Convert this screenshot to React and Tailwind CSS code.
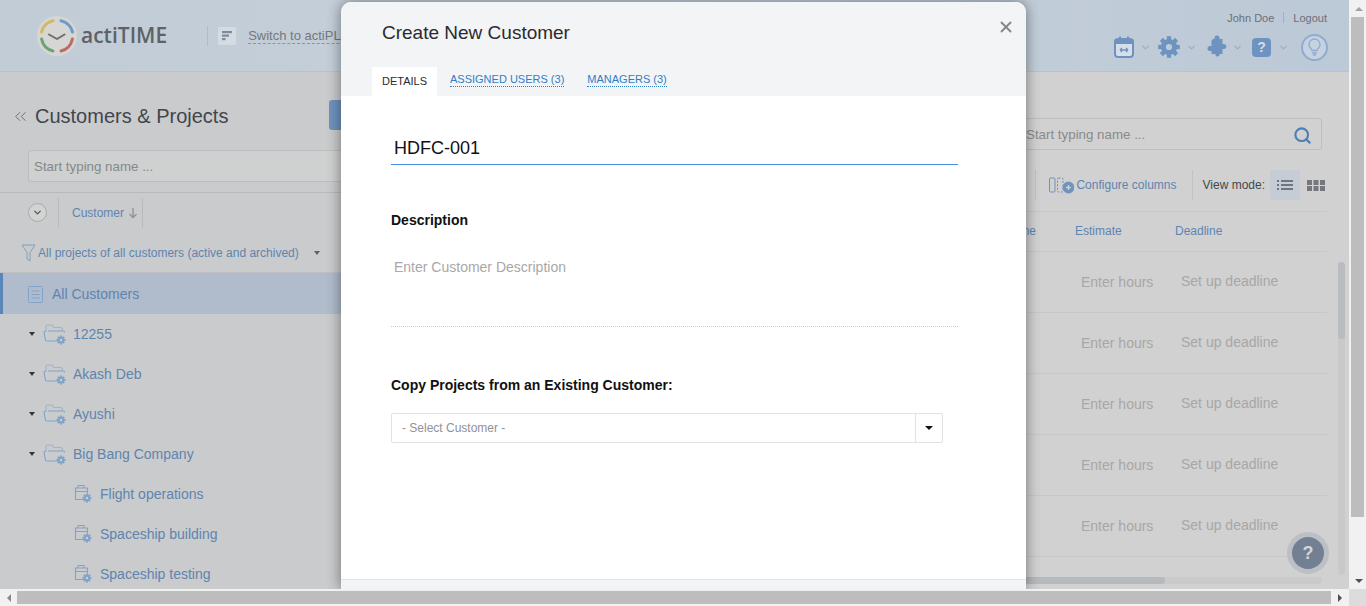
import { ChevronDown, ChevronsLeft, Search, X } from 'lucide-react';

const font = { sans: 'font-["Liberation_Sans",Arial,sans-serif]' };

const customers = [
  { name: '12255', arrow: true },
  { name: 'Akash Deb', arrow: true },
  { name: 'Ayushi', arrow: true },
  { name: 'Big Bang Company', arrow: true },
  { name: 'Flight operations' },
  { name: 'Spaceship building' },
  { name: 'Spaceship testing' },
];

function Gear({ cx, cy, r = 4, color = '#82a3c9' }) {
  const teeth = [0, 45, 90, 135, 180, 225, 270, 315];
  return (
    <g>
      {teeth.map((a) => (
        <rect key={a} x={cx - r * 0.24} y={cy - r * 1.2} width={r * 0.48} height={r * 0.6} fill={color} transform={`rotate(${a} ${cx} ${cy})`} />
      ))}
      <circle cx={cx} cy={cy} r={r * 0.62} fill="none" stroke={color} strokeWidth={r * 0.55} />
    </g>
  );
}

function FolderIcon() {
  return (
    <svg width="24" height="22" viewBox="0 0 24 22" fill="none" className="shrink-0">
      <path d="M3 9V3.500C3 2.700 3.600 2 4.500 2H9l2 2.500h7c.8 0 1.300.6 1.300 1.300V8" stroke="#9db5d2" strokeWidth="1.100" />
      <path d="M5 8h15.500c.8 0 1.200.6 1 1.300M1 10c0-1 .7-2 2-2M1 10l1.500 7c.1.600.6 1 1.200 1H14" stroke="#82a3c9" strokeWidth="1.100" />
      <Gear cx={18} cy={17} r={3.800} />
    </svg>
  );
}

function ProjectIcon() {
  return (
    <svg width="18" height="20" viewBox="0 0 18 20" fill="none" className="shrink-0">
      <path d="M9.500 15.500H1.500V4h12v5M4 4V1.500h6V4M1.500 7.500h12" stroke="#82a3c9" strokeWidth="1.100" />
      <Gear cx={13} cy={14} r={3.800} />
    </svg>
  );
}

function Logo() {
  return (
    <svg width="42" height="42" viewBox="0 0 42 42" fill="none">
      <circle cx="21" cy="21" r="20" fill="#d6d6d4" />
      <g strokeWidth="3" strokeLinecap="round">
        <path d="M5.500 17A15.500 15.500 0 0 1 17 5.800" stroke="#d0b964" />
        <path d="M25 5.800A15.500 15.500 0 0 1 36.500 17" stroke="#6f99c6" />
        <path d="M36.400 24A15.500 15.500 0 0 1 25 36" stroke="#bb6b66" />
        <path d="M17 36A15.500 15.500 0 0 1 5.600 24" stroke="#6ea274" />
      </g>
      <path d="M13 19.500l8 4.500 7.500-4.500" stroke="#6d6d6d" strokeWidth="2" strokeLinecap="round" strokeLinejoin="round" />
    </svg>
  );
}

function HeaderIcons() {
  const blue = '#6e93c0';
  const Chev = () => <ChevronDown size={11} strokeWidth={3} color="#a6adb6" />;
  return (
    <div className="flex items-center">
      <svg width="22" height="24" viewBox="0 0 22 24" fill="none">
        <rect x="2" y="4" width="18" height="18" rx="3" fill="#d5dee9" stroke={blue} strokeWidth="2" />
        <path d="M2 9V6.500C2 5 3 4 4.500 4h13C19 4 20 5 20 6.500V9z" fill={blue} />
        <rect x="6" y="1.500" width="2" height="4" fill={blue} />
        <rect x="14" y="1.500" width="2" height="4" fill={blue} />
        <path d="M7 15h8M7 15l2-2M7 15l2 2M15 15l-2-2M15 15l-2 2" stroke={blue} strokeWidth="1.300" />
      </svg>
      <span className="mr-[7.500px] ml-[4.500px]"><Chev /></span>
      <svg width="22" height="22" viewBox="0 0 22 22"><Gear cx={11} cy={11} r={9} color={blue} /></svg>
      <span className="mr-[9px] ml-[5.500px]"><Chev /></span>
      <svg width="22" height="24" viewBox="1.500 0 22 24" fill={blue}>
        <path d="M9 4h1V3a2.500 2.500 0 0 1 5 0v1h3v5h1.500a2.500 2.500 0 0 1 0 5H18v5h-3v1.500a2.500 2.500 0 0 1-4 0V19H7v-3H5.500a2.500 2.500 0 0 1 0-5H7V6c0-1 1-2 2-2z" />
      </svg>
      <span className="mr-[9.500px] ml-[4px]"><Chev /></span>
      <div className={`flex h-[19px] w-[19px] items-center justify-center rounded-[4px] bg-[#6e93c0] text-[14px] font-bold text-[#d5dee9] ${font.sans}`}>?</div>
      <span className="mr-[12.500px] ml-[6.500px]"><Chev /></span>
      <div className="flex h-[27px] w-[27px] items-center justify-center rounded-full border-2 border-[#8dacd0] bg-[#c6d2df]">
        <svg width="15" height="18" viewBox="0 0 15 18" fill="none" stroke="#8dacd0" strokeWidth="1.300">
          <path d="M5 12.500C4.500 10.500 2 9.500 2 6.500a5.500 5.500 0 0 1 11 0c0 3-2.500 4-3 6z" />
          <path d="M5 15h5M6 17h3" />
        </svg>
      </div>
    </div>
  );
}

function Sidebar() {
  return (
    <div className="flex w-[341px] shrink-0 flex-col bg-[#cacbcc]">
      <div className="flex h-[78px] shrink-0 items-center pt-[10px] pl-[11px]">
        <ChevronsLeft size={19} strokeWidth={1} color="#50555b" />
        <h1 className="ml-[5px] text-[20px] whitespace-nowrap text-[#40464d]">Customers &amp; Projects</h1>
        <div className="-mt-[2px] ml-auto h-[30px] w-[12px] rounded-l-[3px] bg-[#6f93bd]" />
      </div>
      <div className="ml-[28px] flex h-[32px] shrink-0 items-center rounded-l-[3px] border border-r-0 border-[#bcbdbe] bg-[#cfd0d0] pt-[2px] pl-[5px] text-[13.330px] text-[#85888b]">
        Start typing name ...
      </div>
      <div className="mt-[10px] flex h-[42px] shrink-0 items-center border-t border-[#b9babb] pb-[2px] pl-[28px]">
        <div className="flex h-[19px] w-[19px] items-center justify-center rounded-full border border-[#a9abad] bg-[#d2d3d3]">
          <ChevronDown size={11} strokeWidth={3} color="#54585c" />
        </div>
        <div className="ml-[11px] h-[30px] w-px bg-[#b9babb]" />
        <span className="ml-[13px] text-[12px] text-[#5f84b0]">Customer</span>
        <svg width="10" height="12" viewBox="0 0 10 12" fill="none" stroke="#8e9296" strokeWidth="1.300" className="ml-[4px]"><path d="M5 1v9M1.500 7L5 10.500 8.500 7" /></svg>
        <div className="ml-[4px] h-[30px] w-px bg-[#b9babb]" />
      </div>
      <div className="flex h-[39px] shrink-0 items-center border-b border-[#bfc0c1] pl-[21px]">
        <svg width="15" height="18" viewBox="0 0 15 18" fill="none" stroke="#7f9ec3" strokeWidth="1"><path d="M1 1h13L9 8.500V17l-3-2V8.500z" /></svg>
        <span className="ml-[2px] text-[12px] text-[#5f84b0]">All projects of all customers (active and archived)</span>
        <div className="ml-[15px] h-0 w-0 border-x-[3.500px] border-t-[4px] border-x-transparent border-t-[#5c6166]" />
      </div>
      <div className="flex h-[41px] shrink-0 items-center border-l-[3px] border-[#5b87b8] bg-[#b0bccb] pt-[2px] pl-[25px]">
        <svg width="15" height="17" viewBox="0 0 15 17" fill="none" stroke="#82a3c9" strokeWidth="1"><rect x="0.500" y="0.500" width="14" height="16" rx="1" /><path d="M3.500 5h8M3.500 8.500h8M3.500 12h8" /></svg>
        <span className="ml-[9px] text-[14px] text-[#5f84b0]">All Customers</span>
      </div>
      {customers.map((c) => (
        <div key={c.name} className={`flex h-[40px] shrink-0 items-center ${c.arrow ? 'pl-[28px]' : 'pl-[74px]'}`}>
          {c.arrow && <div className="mr-[8px] ml-px h-0 w-0 border-x-[3.500px] border-t-[4px] border-x-transparent border-t-[#33363a]" />}
          {c.arrow ? <FolderIcon /> : <ProjectIcon />}
          <span className={`${c.arrow ? 'ml-[6px]' : 'ml-[8px]'} text-[14px] whitespace-nowrap text-[#5f84b0]`}>{c.name}</span>
        </div>
      ))}
    </div>
  );
}

function TasksPanel() {
  return (
    <div className="relative flex flex-1 flex-col items-end overflow-hidden bg-[#d1d1d1]">
      <div className="mt-[46px] mr-[27px] flex h-[32px] w-[400px] items-center justify-between rounded-r-[3px] border border-[#bebebe] pt-[2px] pr-[9px] pl-[103px] text-[13.330px] text-[#8a8a8a]">
        Start typing name ...
        <Search size={19} strokeWidth={2.700} color="#4f80b4" />
      </div>
      <div className="mt-[20px] mr-[24px] flex h-[30px] items-center">
        <div className="h-[30px] w-px bg-[#c2c2c2]" />
        <svg width="25" height="18" viewBox="0 0 25 18" fill="none" stroke="#6f93bd" strokeWidth="1" className="ml-[13px]">
          <rect x="0.500" y="2" width="5.500" height="14" rx="1" />
          <rect x="8.500" y="2" width="5.500" height="14" rx="1" strokeDasharray="2 1.500" />
          <circle cx="19.500" cy="11.500" r="5.500" fill="#6f93bd" />
          <path d="M17 11.500h5M19.500 9v5" stroke="#d1d1d1" strokeWidth="1.300" />
        </svg>
        <span className="ml-[2px] text-[12px] whitespace-nowrap text-[#5f84b0]">Configure columns</span>
        <div className="ml-[15px] h-[30px] w-px bg-[#c2c2c2]" />
        <span className="ml-[10px] text-[12px] whitespace-nowrap text-[#44484d]">View mode:</span>
        <div className="ml-[5px] flex h-[30px] w-[30px] items-center justify-center bg-[#c5ccd6]">
          <svg width="16" height="10" viewBox="0 0 16 10" fill="#6f7680"><rect x="0" y="0" width="2" height="2" /><rect x="4" y="0" width="12" height="2" /><rect x="0" y="4" width="2" height="2" /><rect x="4" y="4" width="12" height="2" /><rect x="0" y="8" width="2" height="2" /><rect x="4" y="8" width="12" height="2" /></svg>
        </div>
        <svg width="18" height="11" viewBox="0 0 18 11" fill="#74787d" className="ml-[7px]"><rect x="0" y="0" width="5" height="5" /><rect x="6.500" y="0" width="5" height="5" /><rect x="13" y="0" width="5" height="5" /><rect x="0" y="6" width="5" height="5" /><rect x="6.500" y="6" width="5" height="5" /><rect x="13" y="6" width="5" height="5" /></svg>
      </div>
      <div className="mt-[11px] mr-[22px] w-[400px]">
        <div className="grid h-[41px] grid-cols-[148px_100px_1fr] items-center border-y border-[#c8c8c8] pb-[2px] text-[12px] text-[#5f84b0]">
          <span className="pr-[39px] text-right whitespace-nowrap">Time Zone</span>
          <span>Estimate</span>
          <span>Deadline</span>
        </div>
        {[0, 1, 2, 3, 4].map((i) => (
          <div key={i} className="grid h-[61px] grid-cols-[154px_100px_1fr] items-center border-b border-[#c8c8c8] text-[14px] text-[#a7a7a7]">
            <span />
            <span className="mt-px whitespace-nowrap">Enter hours</span>
            <span className="-mt-px whitespace-nowrap">Set up deadline</span>
          </div>
        ))}
      </div>
      {/* inner scrollbars */}
      <div className="absolute top-[190px] right-[4px] h-[313px] w-[7px] rounded-full bg-[#c9c9c9]">
        <div className="h-[77px] rounded-full bg-[#b8bcc0]" />
      </div>
      <div className="absolute right-[27px] bottom-[5px] h-[7px] w-[300px] rounded-full bg-[#c9cacb]">
        <div className="h-[7px] w-[143px] rounded-full bg-[#b6babd]" />
      </div>
      <div className="absolute right-[20px] bottom-[15px] flex h-[42px] w-[42px] items-center justify-center rounded-full border-[5px] border-[#bcc0c6] bg-[#737f93] text-[18px] font-bold text-[#d2d5da]">?</div>
    </div>
  );
}

function CustomerModal() {
  return (
    <div className="absolute top-[2px] left-[341px] flex h-[587px] w-[685px] flex-col overflow-hidden rounded-t-[10px] bg-white shadow-[0_0_14px_rgba(0,0,0,0.45)]">
      <div className="relative h-[94px] shrink-0 bg-[#f3f4f6] pl-[31px]">
        <h2 className="pt-[19px] pl-[10px] text-[19px] leading-[24px] text-[#2b2b2b]">Create New Customer</h2>
        <X size={18} strokeWidth={2.500} color="#85888c" className="absolute top-[16px] right-[11px]" />
        <div className="mt-[22px] flex h-[29px] text-[11px]">
          <div className="flex w-[65px] items-center justify-center bg-white text-[#2b2b2b]">DETAILS</div>
          <span className="mt-[6px] ml-[13px] h-[14px] border-b border-dotted border-[#2f7ec7] leading-[13px] text-[#2f7ec7]">ASSIGNED USERS (3)</span>
          <span className="mt-[6px] ml-[23px] h-[14px] border-b border-dotted border-[#2f7ec7] leading-[13px] text-[#2f7ec7]">MANAGERS (3)</span>
        </div>
      </div>
      <div className="flex-1 pl-[50px]">
        <div className="mt-[40px] h-[29px] w-[567px] border-b border-[#4a90e2] pl-[3px] text-[18px] leading-[24px] text-[#111]">HDFC-001</div>
        <div className="mt-[46px] text-[14px] leading-[18px] font-bold text-[#111]">Description</div>
        <div className="mt-[29px] h-[69px] w-[567px] border-b border-dotted border-[#c9c9c9] pl-[3px] text-[14px] leading-[18px] text-[#a8a8a8]">Enter Customer Description</div>
        <div className="mt-[49px] text-[14px] leading-[18px] font-bold text-[#111]">Copy Projects from an Existing Customer:</div>
        <div className="mt-[19px] flex h-[30px] w-[552px] items-center rounded-[2px] border border-[#e2e2e2] text-[12px] text-[#8f9297]">
          <span className="flex-1 pl-[10px]">- Select Customer -</span>
          <div className="flex h-full w-[27px] items-center justify-center border-l border-[#e2e2e2]">
            <div className="h-0 w-0 border-x-[4px] border-t-[4px] border-x-transparent border-t-[#111]" />
          </div>
        </div>
      </div>
      <div className="h-[10px] shrink-0 border-t border-[#e4e4e4] bg-[#f3f4f6]" />
    </div>
  );
}

export default function App() {
  return (
    <div className={`flex h-[606px] w-[1366px] flex-col overflow-hidden bg-[#f1f1f1] ${font.sans}`}>
      <div className="flex h-[589px] shrink-0">
        <div className="relative w-[1349px] shrink-0 overflow-hidden">
          <header className="flex h-[72px] items-center justify-between border-b border-[#b9c3cd] bg-gradient-to-r from-[#c2ccd6] via-[#c6d0da] to-[#bcc9d6] pr-[21px] pl-[36px]">
            <div className="flex items-center">
              <Logo />
              <span className='ml-[3px] font-["Open_Sans",sans-serif] text-[21px] font-semibold text-[#5e6266]'>actiTIME</span>
              <div className="ml-[40px] h-[20px] w-px bg-[#b0bcc9]" />
              <div className="ml-[10px] flex h-[18px] w-[18px] items-center justify-center rounded-[2px] bg-[#d5dbe2]">
                <svg width="12" height="12" viewBox="0 0 12 12" fill="#7d8b9b"><rect x="1" y="1" width="10" height="2.200" /><rect x="1" y="4.500" width="7" height="2.200" /><rect x="1" y="8" width="3.500" height="2.200" /></svg>
              </div>
              <span className="ml-[12px] border-b border-dashed border-[#8d949b] text-[13px] leading-[15px] whitespace-nowrap text-[#74787e]">Switch to actiPLAN</span>
            </div>
            <div className="flex flex-col items-end">
              <div className="mr-[1px] mb-[9px] flex items-center text-[11px] leading-[14px] text-[#6c7076]">
                John Doe
                <span className="mx-[9px] h-[11px] w-px bg-[#a8aeb5]" />
                Logout
              </div>
              <HeaderIcons />
            </div>
          </header>
          <div className="flex h-[517px]">
            <Sidebar />
            <TasksPanel />
          </div>
          <CustomerModal />
        </div>
        {/* page scrollbar, vertical */}
        <div className="flex w-[17px] flex-col items-end bg-[#f1f1f1]">
          <div className="flex h-[17px] w-full items-center justify-center pl-[2px]">
            <div className="h-0 w-0 border-x-[4px] border-b-[4px] border-x-transparent border-b-[#a3a3a3]" />
          </div>
          <div className="mr-[2px] h-[500px] w-[13px] bg-[#bdbdbd]" />
          <div className="mt-auto flex h-[17px] w-full items-center justify-center pl-[2px]">
            <div className="h-0 w-0 border-x-[4px] border-t-[4px] border-x-transparent border-t-[#505050]" />
          </div>
        </div>
      </div>
      {/* page scrollbar, horizontal */}
      <div className="flex h-[17px] items-center">
        <div className="flex h-full w-[17px] items-center justify-center">
          <div className="h-0 w-0 border-y-[4px] border-r-[4px] border-y-transparent border-r-[#8a8a8a]" />
        </div>
        <div className="h-[13px] w-[1314px] bg-[#bdbdbd]" />
        <div className="flex h-full w-[18px] items-center justify-center">
          <div className="h-0 w-0 border-y-[4px] border-l-[4px] border-y-transparent border-l-[#505050]" />
        </div>
        <div className="ml-auto h-full w-[17px] bg-[#dcdcdc]" />
      </div>
    </div>
  );
}
